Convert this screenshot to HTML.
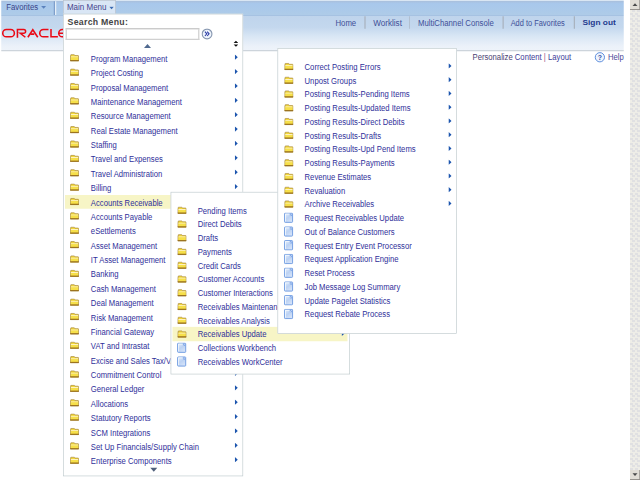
<!DOCTYPE html>
<html><head><meta charset="utf-8"><style>
html,body{margin:0;padding:0;width:640px;height:480px;overflow:hidden;background:#fff}
#s{position:absolute;left:0;top:0;width:1024px;height:768px;transform:scale(0.625);transform-origin:0 0;font-family:"Liberation Sans",sans-serif;overflow:hidden;background:#fff}
.a{position:absolute}
.t{font-size:12.3px;line-height:14px;color:#30309a;white-space:nowrap;transform:scaleY(1.12);transform-origin:0 11.3px}
.hl{background:#f7f5c6}
.menu{position:absolute;background:#fff;border:1.6px solid #bcc8cb;box-sizing:border-box;overflow:hidden}
.hdr{font-size:12.4px;line-height:14px;color:#3e4f98;white-space:nowrap;transform-origin:0 11.3px;transform:scaleY(1.12)}
.sep{position:absolute;width:1.6px;background:#a9b3bf}
</style></head><body><svg width="0" height="0" style="position:absolute"><defs><linearGradient id="pg" x1="0" y1="0" x2="0.6" y2="1"><stop offset="0" stop-color="#e4eefb"/><stop offset="0.55" stop-color="#bcd2f3"/><stop offset="1" stop-color="#d4e2f8"/></linearGradient></defs></svg><div id="s">
<div class="a" style="left:1.6px;top:0;width:996.8px;height:82.2px;background:linear-gradient(#d9e6f3 0,#d9e6f3 1.8px,#a9bfdc 1.8px,#a9c3e2 3px,#a8c8ec 6px,#aecbe8 23.4px,#a6c2e2 23.4px,#a6c2e2 25.4px,#bfd4ec 25.4px,#c4d8ee 44px,#dae7f5 59px,#ebf1f9 73.7px,#eef3fa 80.4px,#cdd4db 80.4px,#cdd4db 82.2px)"></div>
<div class="a hdr" style="left:10px;top:5.2px;color:#3a4488">Favorites</div>
<svg class="a" style="left:65px;top:9px" width="10" height="6" viewBox="0 0 10 6"><path d="M0.8 0.5 H8.8 L4.8 5 Z" fill="#5b82bd"/></svg>
<div class="a" style="left:86px;top:1.8px;width:1.7px;height:22px;background:#7f9fcb"></div>
<div class="a" style="left:87.7px;top:1.8px;width:1.9px;height:22px;background:#e6eff8"></div>
<svg class="a" style="left:0;top:40px" width="101" height="26" viewBox="0 0 101 26">
<g fill="none" stroke="#ea0a16" stroke-width="2.5">
<rect x="4.4" y="7.3" width="18.6" height="11.6" rx="5.8"/>
<path d="M27.9 20.2 V7.3 H38 A2.95 2.95 0 0 1 38 13.2 H32.5 L40.6 19.6"/>
<path d="M44.6 19.6 L52.5 7.6 L60.4 19.6"/>
<path d="M48.6 14.6 H54.8"/>
<path d="M77.6 7.3 H69.4 A5.8 5.8 0 0 0 69.4 18.9 H77.6"/>
<path d="M81.6 6.2 V18.9 H92.6"/>
<path d="M104 7.3 H99.8 A5.8 5.8 0 0 0 99.8 18.9 H104 M95 13.1 H104"/>
</g></svg>
<div class="a hdr" style="left:536.8px;top:29.5px;transform:scale(1.0,1.12)">Home</div>
<div class="a hdr" style="left:596.8px;top:29.5px;transform:scale(1.05,1.12)">Worklist</div>
<div class="a hdr" style="left:668.8px;top:29.5px;transform:scale(1.0,1.12)">MultiChannel Console</div>
<div class="a hdr" style="left:817.4px;top:29.5px;transform:scale(0.96,1.12)">Add to Favorites</div>
<div class="sep" style="left:583.2px;top:25.6px;height:20.8px"></div>
<div class="sep" style="left:654.6px;top:25.6px;height:20.8px"></div>
<div class="sep" style="left:804.4px;top:25.6px;height:20.8px"></div>
<div class="sep" style="left:918.2px;top:25.6px;height:20.8px"></div>
<div class="a hdr" style="left:932px;top:28.6px;font-size:12px;font-weight:bold;color:#1f3b8e;transform:scale(1.11,1.03)">Sign out</div>
<div class="a hdr" style="left:756px;top:84.5px;font-size:12.3px;color:#3c3c98"><span style="color:#4a4272">Personalize</span> Content <span style="color:#9a4a8a">|</span> Layout</div>
<svg class="a" style="left:950px;top:82px" width="20" height="20" viewBox="0 0 20 20"><circle cx="9.8" cy="9.6" r="7.4" fill="#eef4fd" stroke="#5f8fdc" stroke-width="1.6"/><text x="9.8" y="14" font-family="Liberation Sans" font-weight="bold" font-size="11" fill="#3354a8" text-anchor="middle">?</text></svg>
<div class="a hdr" style="left:972.8px;top:84.5px;font-size:12.3px;color:#4a4a98">Help</div>
<div class="a" style="left:1008px;top:0;width:16px;height:768px;background:conic-gradient(#e0e0e2 25%,#eeede7 0 50%,#e0e0e2 0 75%,#eeede7 0) 0 0/8px 8px"></div>
<div class="a" style="left:1008px;top:0;width:16px;height:15.5px;background:#e2ded6;border-right:1.6px solid #8a8680;border-bottom:1.6px solid #6a6660;box-sizing:border-box"></div>
<svg class="a" style="left:1010px;top:2px" width="12" height="10" viewBox="0 0 12 10"><path d="M2 7.5 L6 3 L10 7.5 Z" fill="#4a4a4a"/></svg>
<div class="a" style="left:1008px;top:752px;width:16px;height:16px;background:#e2ded6;border-right:1.6px solid #8a8680;border-bottom:1.6px solid #6a6660;box-sizing:border-box"></div>
<svg class="a" style="left:1010px;top:754px" width="12" height="10" viewBox="0 0 12 10"><path d="M2 3 L6 7.5 L10 3 Z" fill="#4a4a4a"/></svg>
<div class="a" style="left:100.8px;top:0;width:84.2px;height:22.4px;background:#d9e6f5;border:1.6px solid #b5bec9;border-bottom:none;box-sizing:border-box"></div>
<div class="a hdr" style="left:107px;top:5px;color:#45458e;transform:scale(1.035,1.12)">Main Menu</div>
<svg class="a" style="left:174px;top:10px" width="10" height="6" viewBox="0 0 10 6"><path d="M1 0.6 H8 L4.5 4.6 Z" fill="#3b6ab2"/></svg>
<div class="menu" style="left:100.8px;top:22px;width:288px;height:740px"></div>
<div class="a" style="left:108.2px;top:27px;font-size:14px;font-weight:bold;color:#454545;letter-spacing:0.42px;white-space:nowrap">Search Menu:</div>
<div class="a" style="left:104.6px;top:44.6px;width:214px;height:19px;background:#fff;border:2px solid #d0d0d0;border-top-color:#c4c4c4;box-sizing:border-box"></div>
<svg class="a" style="left:322px;top:44.6px" width="20" height="20" viewBox="0 0 20 20"><circle cx="9.3" cy="9.3" r="7.8" fill="#eef4fc" stroke="#8797b0" stroke-width="1.8"/><path d="M5.9 5.6 L8.9 9.1 L5.9 12.6 M9.5 5.6 L12.5 9.1 L9.5 12.6" fill="none" stroke="#2b3ca6" stroke-width="1.7"/></svg>
<svg class="a" style="left:229px;top:68.5px" width="14" height="9" viewBox="0 0 14 9"><path d="M1.4 7.8 L7 1.3 L12.6 7.8 Z" fill="#50698f"/></svg>
<svg class="a" style="left:372px;top:64px" width="11" height="12" viewBox="0 0 11 12"><path d="M1.8 4.6 L5.5 1 L9.2 4.6 Z M1.8 7 L5.5 10.8 L9.2 7 Z" fill="#111"/></svg>
<svg class="a" style="left:111.0px;top:85.7px" width="16" height="13" viewBox="0 0 16 13"><path d="M2.2 3.4 V1.9 Q2.2 1.5 2.6 1.5 H7.6 Q8 1.5 8.3 1.9 L8.9 2.9 H14 Q14.6 2.9 14.6 3.5 V11.4 H1.8 V3.4 Z" fill="#f2d83a" stroke="#a88840" stroke-width="1.1"/><rect x="2.4" y="4.4" width="11.6" height="1.5" fill="#fff6d4"/><rect x="2.4" y="5.9" width="11.6" height="4" fill="#f6e04a"/><rect x="1.3" y="10" width="13.8" height="1.9" fill="#9c7420"/></svg>
<div class="a t" style="left:145.4px;top:87.8px">Program Management</div>
<svg class="a" style="left:375.3px;top:86.8px" width="6" height="9" viewBox="0 0 6 9"><path d="M0.9 0.3 L5.4 4.5 L0.9 8.7 Z" fill="#1c55ae"/></svg>
<svg class="a" style="left:111.0px;top:108.7px" width="16" height="13" viewBox="0 0 16 13"><path d="M2.2 3.4 V1.9 Q2.2 1.5 2.6 1.5 H7.6 Q8 1.5 8.3 1.9 L8.9 2.9 H14 Q14.6 2.9 14.6 3.5 V11.4 H1.8 V3.4 Z" fill="#f2d83a" stroke="#a88840" stroke-width="1.1"/><rect x="2.4" y="4.4" width="11.6" height="1.5" fill="#fff6d4"/><rect x="2.4" y="5.9" width="11.6" height="4" fill="#f6e04a"/><rect x="1.3" y="10" width="13.8" height="1.9" fill="#9c7420"/></svg>
<div class="a t" style="left:145.4px;top:110.8px">Project Costing</div>
<svg class="a" style="left:375.3px;top:109.8px" width="6" height="9" viewBox="0 0 6 9"><path d="M0.9 0.3 L5.4 4.5 L0.9 8.7 Z" fill="#1c55ae"/></svg>
<svg class="a" style="left:111.0px;top:131.8px" width="16" height="13" viewBox="0 0 16 13"><path d="M2.2 3.4 V1.9 Q2.2 1.5 2.6 1.5 H7.6 Q8 1.5 8.3 1.9 L8.9 2.9 H14 Q14.6 2.9 14.6 3.5 V11.4 H1.8 V3.4 Z" fill="#f2d83a" stroke="#a88840" stroke-width="1.1"/><rect x="2.4" y="4.4" width="11.6" height="1.5" fill="#fff6d4"/><rect x="2.4" y="5.9" width="11.6" height="4" fill="#f6e04a"/><rect x="1.3" y="10" width="13.8" height="1.9" fill="#9c7420"/></svg>
<div class="a t" style="left:145.4px;top:133.8px">Proposal Management</div>
<svg class="a" style="left:375.3px;top:132.8px" width="6" height="9" viewBox="0 0 6 9"><path d="M0.9 0.3 L5.4 4.5 L0.9 8.7 Z" fill="#1c55ae"/></svg>
<svg class="a" style="left:111.0px;top:154.8px" width="16" height="13" viewBox="0 0 16 13"><path d="M2.2 3.4 V1.9 Q2.2 1.5 2.6 1.5 H7.6 Q8 1.5 8.3 1.9 L8.9 2.9 H14 Q14.6 2.9 14.6 3.5 V11.4 H1.8 V3.4 Z" fill="#f2d83a" stroke="#a88840" stroke-width="1.1"/><rect x="2.4" y="4.4" width="11.6" height="1.5" fill="#fff6d4"/><rect x="2.4" y="5.9" width="11.6" height="4" fill="#f6e04a"/><rect x="1.3" y="10" width="13.8" height="1.9" fill="#9c7420"/></svg>
<div class="a t" style="left:145.4px;top:156.9px">Maintenance Management</div>
<svg class="a" style="left:375.3px;top:155.9px" width="6" height="9" viewBox="0 0 6 9"><path d="M0.9 0.3 L5.4 4.5 L0.9 8.7 Z" fill="#1c55ae"/></svg>
<svg class="a" style="left:111.0px;top:177.8px" width="16" height="13" viewBox="0 0 16 13"><path d="M2.2 3.4 V1.9 Q2.2 1.5 2.6 1.5 H7.6 Q8 1.5 8.3 1.9 L8.9 2.9 H14 Q14.6 2.9 14.6 3.5 V11.4 H1.8 V3.4 Z" fill="#f2d83a" stroke="#a88840" stroke-width="1.1"/><rect x="2.4" y="4.4" width="11.6" height="1.5" fill="#fff6d4"/><rect x="2.4" y="5.9" width="11.6" height="4" fill="#f6e04a"/><rect x="1.3" y="10" width="13.8" height="1.9" fill="#9c7420"/></svg>
<div class="a t" style="left:145.4px;top:179.9px">Resource Management</div>
<svg class="a" style="left:375.3px;top:178.9px" width="6" height="9" viewBox="0 0 6 9"><path d="M0.9 0.3 L5.4 4.5 L0.9 8.7 Z" fill="#1c55ae"/></svg>
<svg class="a" style="left:111.0px;top:200.8px" width="16" height="13" viewBox="0 0 16 13"><path d="M2.2 3.4 V1.9 Q2.2 1.5 2.6 1.5 H7.6 Q8 1.5 8.3 1.9 L8.9 2.9 H14 Q14.6 2.9 14.6 3.5 V11.4 H1.8 V3.4 Z" fill="#f2d83a" stroke="#a88840" stroke-width="1.1"/><rect x="2.4" y="4.4" width="11.6" height="1.5" fill="#fff6d4"/><rect x="2.4" y="5.9" width="11.6" height="4" fill="#f6e04a"/><rect x="1.3" y="10" width="13.8" height="1.9" fill="#9c7420"/></svg>
<div class="a t" style="left:145.4px;top:202.9px">Real Estate Management</div>
<svg class="a" style="left:375.3px;top:201.9px" width="6" height="9" viewBox="0 0 6 9"><path d="M0.9 0.3 L5.4 4.5 L0.9 8.7 Z" fill="#1c55ae"/></svg>
<svg class="a" style="left:111.0px;top:223.8px" width="16" height="13" viewBox="0 0 16 13"><path d="M2.2 3.4 V1.9 Q2.2 1.5 2.6 1.5 H7.6 Q8 1.5 8.3 1.9 L8.9 2.9 H14 Q14.6 2.9 14.6 3.5 V11.4 H1.8 V3.4 Z" fill="#f2d83a" stroke="#a88840" stroke-width="1.1"/><rect x="2.4" y="4.4" width="11.6" height="1.5" fill="#fff6d4"/><rect x="2.4" y="5.9" width="11.6" height="4" fill="#f6e04a"/><rect x="1.3" y="10" width="13.8" height="1.9" fill="#9c7420"/></svg>
<div class="a t" style="left:145.4px;top:225.9px">Staffing</div>
<svg class="a" style="left:375.3px;top:224.9px" width="6" height="9" viewBox="0 0 6 9"><path d="M0.9 0.3 L5.4 4.5 L0.9 8.7 Z" fill="#1c55ae"/></svg>
<svg class="a" style="left:111.0px;top:246.8px" width="16" height="13" viewBox="0 0 16 13"><path d="M2.2 3.4 V1.9 Q2.2 1.5 2.6 1.5 H7.6 Q8 1.5 8.3 1.9 L8.9 2.9 H14 Q14.6 2.9 14.6 3.5 V11.4 H1.8 V3.4 Z" fill="#f2d83a" stroke="#a88840" stroke-width="1.1"/><rect x="2.4" y="4.4" width="11.6" height="1.5" fill="#fff6d4"/><rect x="2.4" y="5.9" width="11.6" height="4" fill="#f6e04a"/><rect x="1.3" y="10" width="13.8" height="1.9" fill="#9c7420"/></svg>
<div class="a t" style="left:145.4px;top:248.9px">Travel and Expenses</div>
<svg class="a" style="left:375.3px;top:247.9px" width="6" height="9" viewBox="0 0 6 9"><path d="M0.9 0.3 L5.4 4.5 L0.9 8.7 Z" fill="#1c55ae"/></svg>
<svg class="a" style="left:111.0px;top:269.9px" width="16" height="13" viewBox="0 0 16 13"><path d="M2.2 3.4 V1.9 Q2.2 1.5 2.6 1.5 H7.6 Q8 1.5 8.3 1.9 L8.9 2.9 H14 Q14.6 2.9 14.6 3.5 V11.4 H1.8 V3.4 Z" fill="#f2d83a" stroke="#a88840" stroke-width="1.1"/><rect x="2.4" y="4.4" width="11.6" height="1.5" fill="#fff6d4"/><rect x="2.4" y="5.9" width="11.6" height="4" fill="#f6e04a"/><rect x="1.3" y="10" width="13.8" height="1.9" fill="#9c7420"/></svg>
<div class="a t" style="left:145.4px;top:272.0px">Travel Administration</div>
<svg class="a" style="left:375.3px;top:271.0px" width="6" height="9" viewBox="0 0 6 9"><path d="M0.9 0.3 L5.4 4.5 L0.9 8.7 Z" fill="#1c55ae"/></svg>
<svg class="a" style="left:111.0px;top:292.9px" width="16" height="13" viewBox="0 0 16 13"><path d="M2.2 3.4 V1.9 Q2.2 1.5 2.6 1.5 H7.6 Q8 1.5 8.3 1.9 L8.9 2.9 H14 Q14.6 2.9 14.6 3.5 V11.4 H1.8 V3.4 Z" fill="#f2d83a" stroke="#a88840" stroke-width="1.1"/><rect x="2.4" y="4.4" width="11.6" height="1.5" fill="#fff6d4"/><rect x="2.4" y="5.9" width="11.6" height="4" fill="#f6e04a"/><rect x="1.3" y="10" width="13.8" height="1.9" fill="#9c7420"/></svg>
<div class="a t" style="left:145.4px;top:295.0px">Billing</div>
<svg class="a" style="left:375.3px;top:294.0px" width="6" height="9" viewBox="0 0 6 9"><path d="M0.9 0.3 L5.4 4.5 L0.9 8.7 Z" fill="#1c55ae"/></svg>
<div class="a hl" style="left:104.0px;top:312.1px;width:281.6px;height:22.4px"></div>
<svg class="a" style="left:111.0px;top:315.9px" width="16" height="13" viewBox="0 0 16 13"><path d="M2.2 3.4 V1.9 Q2.2 1.5 2.6 1.5 H7.6 Q8 1.5 8.3 1.9 L8.9 2.9 H14 Q14.6 2.9 14.6 3.5 V11.4 H1.8 V3.4 Z" fill="#f2d83a" stroke="#a88840" stroke-width="1.1"/><rect x="2.4" y="4.4" width="11.6" height="1.5" fill="#fff6d4"/><rect x="2.4" y="5.9" width="11.6" height="4" fill="#f6e04a"/><rect x="1.3" y="10" width="13.8" height="1.9" fill="#9c7420"/></svg>
<div class="a t" style="left:145.4px;top:318.0px">Accounts Receivable</div>
<svg class="a" style="left:375.3px;top:317.0px" width="6" height="9" viewBox="0 0 6 9"><path d="M0.9 0.3 L5.4 4.5 L0.9 8.7 Z" fill="#1c55ae"/></svg>
<svg class="a" style="left:111.0px;top:338.9px" width="16" height="13" viewBox="0 0 16 13"><path d="M2.2 3.4 V1.9 Q2.2 1.5 2.6 1.5 H7.6 Q8 1.5 8.3 1.9 L8.9 2.9 H14 Q14.6 2.9 14.6 3.5 V11.4 H1.8 V3.4 Z" fill="#f2d83a" stroke="#a88840" stroke-width="1.1"/><rect x="2.4" y="4.4" width="11.6" height="1.5" fill="#fff6d4"/><rect x="2.4" y="5.9" width="11.6" height="4" fill="#f6e04a"/><rect x="1.3" y="10" width="13.8" height="1.9" fill="#9c7420"/></svg>
<div class="a t" style="left:145.4px;top:341.0px">Accounts Payable</div>
<svg class="a" style="left:375.3px;top:340.0px" width="6" height="9" viewBox="0 0 6 9"><path d="M0.9 0.3 L5.4 4.5 L0.9 8.7 Z" fill="#1c55ae"/></svg>
<svg class="a" style="left:111.0px;top:361.9px" width="16" height="13" viewBox="0 0 16 13"><path d="M2.2 3.4 V1.9 Q2.2 1.5 2.6 1.5 H7.6 Q8 1.5 8.3 1.9 L8.9 2.9 H14 Q14.6 2.9 14.6 3.5 V11.4 H1.8 V3.4 Z" fill="#f2d83a" stroke="#a88840" stroke-width="1.1"/><rect x="2.4" y="4.4" width="11.6" height="1.5" fill="#fff6d4"/><rect x="2.4" y="5.9" width="11.6" height="4" fill="#f6e04a"/><rect x="1.3" y="10" width="13.8" height="1.9" fill="#9c7420"/></svg>
<div class="a t" style="left:145.4px;top:364.1px">eSettlements</div>
<svg class="a" style="left:375.3px;top:363.1px" width="6" height="9" viewBox="0 0 6 9"><path d="M0.9 0.3 L5.4 4.5 L0.9 8.7 Z" fill="#1c55ae"/></svg>
<svg class="a" style="left:111.0px;top:385.0px" width="16" height="13" viewBox="0 0 16 13"><path d="M2.2 3.4 V1.9 Q2.2 1.5 2.6 1.5 H7.6 Q8 1.5 8.3 1.9 L8.9 2.9 H14 Q14.6 2.9 14.6 3.5 V11.4 H1.8 V3.4 Z" fill="#f2d83a" stroke="#a88840" stroke-width="1.1"/><rect x="2.4" y="4.4" width="11.6" height="1.5" fill="#fff6d4"/><rect x="2.4" y="5.9" width="11.6" height="4" fill="#f6e04a"/><rect x="1.3" y="10" width="13.8" height="1.9" fill="#9c7420"/></svg>
<div class="a t" style="left:145.4px;top:387.1px">Asset Management</div>
<svg class="a" style="left:375.3px;top:386.1px" width="6" height="9" viewBox="0 0 6 9"><path d="M0.9 0.3 L5.4 4.5 L0.9 8.7 Z" fill="#1c55ae"/></svg>
<svg class="a" style="left:111.0px;top:408.0px" width="16" height="13" viewBox="0 0 16 13"><path d="M2.2 3.4 V1.9 Q2.2 1.5 2.6 1.5 H7.6 Q8 1.5 8.3 1.9 L8.9 2.9 H14 Q14.6 2.9 14.6 3.5 V11.4 H1.8 V3.4 Z" fill="#f2d83a" stroke="#a88840" stroke-width="1.1"/><rect x="2.4" y="4.4" width="11.6" height="1.5" fill="#fff6d4"/><rect x="2.4" y="5.9" width="11.6" height="4" fill="#f6e04a"/><rect x="1.3" y="10" width="13.8" height="1.9" fill="#9c7420"/></svg>
<div class="a t" style="left:145.4px;top:410.1px">IT Asset Management</div>
<svg class="a" style="left:375.3px;top:409.1px" width="6" height="9" viewBox="0 0 6 9"><path d="M0.9 0.3 L5.4 4.5 L0.9 8.7 Z" fill="#1c55ae"/></svg>
<svg class="a" style="left:111.0px;top:431.0px" width="16" height="13" viewBox="0 0 16 13"><path d="M2.2 3.4 V1.9 Q2.2 1.5 2.6 1.5 H7.6 Q8 1.5 8.3 1.9 L8.9 2.9 H14 Q14.6 2.9 14.6 3.5 V11.4 H1.8 V3.4 Z" fill="#f2d83a" stroke="#a88840" stroke-width="1.1"/><rect x="2.4" y="4.4" width="11.6" height="1.5" fill="#fff6d4"/><rect x="2.4" y="5.9" width="11.6" height="4" fill="#f6e04a"/><rect x="1.3" y="10" width="13.8" height="1.9" fill="#9c7420"/></svg>
<div class="a t" style="left:145.4px;top:433.1px">Banking</div>
<svg class="a" style="left:375.3px;top:432.1px" width="6" height="9" viewBox="0 0 6 9"><path d="M0.9 0.3 L5.4 4.5 L0.9 8.7 Z" fill="#1c55ae"/></svg>
<svg class="a" style="left:111.0px;top:454.0px" width="16" height="13" viewBox="0 0 16 13"><path d="M2.2 3.4 V1.9 Q2.2 1.5 2.6 1.5 H7.6 Q8 1.5 8.3 1.9 L8.9 2.9 H14 Q14.6 2.9 14.6 3.5 V11.4 H1.8 V3.4 Z" fill="#f2d83a" stroke="#a88840" stroke-width="1.1"/><rect x="2.4" y="4.4" width="11.6" height="1.5" fill="#fff6d4"/><rect x="2.4" y="5.9" width="11.6" height="4" fill="#f6e04a"/><rect x="1.3" y="10" width="13.8" height="1.9" fill="#9c7420"/></svg>
<div class="a t" style="left:145.4px;top:456.1px">Cash Management</div>
<svg class="a" style="left:375.3px;top:455.1px" width="6" height="9" viewBox="0 0 6 9"><path d="M0.9 0.3 L5.4 4.5 L0.9 8.7 Z" fill="#1c55ae"/></svg>
<svg class="a" style="left:111.0px;top:477.0px" width="16" height="13" viewBox="0 0 16 13"><path d="M2.2 3.4 V1.9 Q2.2 1.5 2.6 1.5 H7.6 Q8 1.5 8.3 1.9 L8.9 2.9 H14 Q14.6 2.9 14.6 3.5 V11.4 H1.8 V3.4 Z" fill="#f2d83a" stroke="#a88840" stroke-width="1.1"/><rect x="2.4" y="4.4" width="11.6" height="1.5" fill="#fff6d4"/><rect x="2.4" y="5.9" width="11.6" height="4" fill="#f6e04a"/><rect x="1.3" y="10" width="13.8" height="1.9" fill="#9c7420"/></svg>
<div class="a t" style="left:145.4px;top:479.1px">Deal Management</div>
<svg class="a" style="left:375.3px;top:478.1px" width="6" height="9" viewBox="0 0 6 9"><path d="M0.9 0.3 L5.4 4.5 L0.9 8.7 Z" fill="#1c55ae"/></svg>
<svg class="a" style="left:111.0px;top:500.1px" width="16" height="13" viewBox="0 0 16 13"><path d="M2.2 3.4 V1.9 Q2.2 1.5 2.6 1.5 H7.6 Q8 1.5 8.3 1.9 L8.9 2.9 H14 Q14.6 2.9 14.6 3.5 V11.4 H1.8 V3.4 Z" fill="#f2d83a" stroke="#a88840" stroke-width="1.1"/><rect x="2.4" y="4.4" width="11.6" height="1.5" fill="#fff6d4"/><rect x="2.4" y="5.9" width="11.6" height="4" fill="#f6e04a"/><rect x="1.3" y="10" width="13.8" height="1.9" fill="#9c7420"/></svg>
<div class="a t" style="left:145.4px;top:502.2px">Risk Management</div>
<svg class="a" style="left:375.3px;top:501.2px" width="6" height="9" viewBox="0 0 6 9"><path d="M0.9 0.3 L5.4 4.5 L0.9 8.7 Z" fill="#1c55ae"/></svg>
<svg class="a" style="left:111.0px;top:523.1px" width="16" height="13" viewBox="0 0 16 13"><path d="M2.2 3.4 V1.9 Q2.2 1.5 2.6 1.5 H7.6 Q8 1.5 8.3 1.9 L8.9 2.9 H14 Q14.6 2.9 14.6 3.5 V11.4 H1.8 V3.4 Z" fill="#f2d83a" stroke="#a88840" stroke-width="1.1"/><rect x="2.4" y="4.4" width="11.6" height="1.5" fill="#fff6d4"/><rect x="2.4" y="5.9" width="11.6" height="4" fill="#f6e04a"/><rect x="1.3" y="10" width="13.8" height="1.9" fill="#9c7420"/></svg>
<div class="a t" style="left:145.4px;top:525.2px">Financial Gateway</div>
<svg class="a" style="left:375.3px;top:524.2px" width="6" height="9" viewBox="0 0 6 9"><path d="M0.9 0.3 L5.4 4.5 L0.9 8.7 Z" fill="#1c55ae"/></svg>
<svg class="a" style="left:111.0px;top:546.1px" width="16" height="13" viewBox="0 0 16 13"><path d="M2.2 3.4 V1.9 Q2.2 1.5 2.6 1.5 H7.6 Q8 1.5 8.3 1.9 L8.9 2.9 H14 Q14.6 2.9 14.6 3.5 V11.4 H1.8 V3.4 Z" fill="#f2d83a" stroke="#a88840" stroke-width="1.1"/><rect x="2.4" y="4.4" width="11.6" height="1.5" fill="#fff6d4"/><rect x="2.4" y="5.9" width="11.6" height="4" fill="#f6e04a"/><rect x="1.3" y="10" width="13.8" height="1.9" fill="#9c7420"/></svg>
<div class="a t" style="left:145.4px;top:548.2px">VAT and Intrastat</div>
<svg class="a" style="left:375.3px;top:547.2px" width="6" height="9" viewBox="0 0 6 9"><path d="M0.9 0.3 L5.4 4.5 L0.9 8.7 Z" fill="#1c55ae"/></svg>
<svg class="a" style="left:111.0px;top:569.1px" width="16" height="13" viewBox="0 0 16 13"><path d="M2.2 3.4 V1.9 Q2.2 1.5 2.6 1.5 H7.6 Q8 1.5 8.3 1.9 L8.9 2.9 H14 Q14.6 2.9 14.6 3.5 V11.4 H1.8 V3.4 Z" fill="#f2d83a" stroke="#a88840" stroke-width="1.1"/><rect x="2.4" y="4.4" width="11.6" height="1.5" fill="#fff6d4"/><rect x="2.4" y="5.9" width="11.6" height="4" fill="#f6e04a"/><rect x="1.3" y="10" width="13.8" height="1.9" fill="#9c7420"/></svg>
<div class="a t" style="left:145.4px;top:571.2px">Excise and Sales Tax/VAT IND</div>
<svg class="a" style="left:375.3px;top:570.2px" width="6" height="9" viewBox="0 0 6 9"><path d="M0.9 0.3 L5.4 4.5 L0.9 8.7 Z" fill="#1c55ae"/></svg>
<svg class="a" style="left:111.0px;top:592.1px" width="16" height="13" viewBox="0 0 16 13"><path d="M2.2 3.4 V1.9 Q2.2 1.5 2.6 1.5 H7.6 Q8 1.5 8.3 1.9 L8.9 2.9 H14 Q14.6 2.9 14.6 3.5 V11.4 H1.8 V3.4 Z" fill="#f2d83a" stroke="#a88840" stroke-width="1.1"/><rect x="2.4" y="4.4" width="11.6" height="1.5" fill="#fff6d4"/><rect x="2.4" y="5.9" width="11.6" height="4" fill="#f6e04a"/><rect x="1.3" y="10" width="13.8" height="1.9" fill="#9c7420"/></svg>
<div class="a t" style="left:145.4px;top:594.2px">Commitment Control</div>
<svg class="a" style="left:375.3px;top:593.2px" width="6" height="9" viewBox="0 0 6 9"><path d="M0.9 0.3 L5.4 4.5 L0.9 8.7 Z" fill="#1c55ae"/></svg>
<svg class="a" style="left:111.0px;top:615.2px" width="16" height="13" viewBox="0 0 16 13"><path d="M2.2 3.4 V1.9 Q2.2 1.5 2.6 1.5 H7.6 Q8 1.5 8.3 1.9 L8.9 2.9 H14 Q14.6 2.9 14.6 3.5 V11.4 H1.8 V3.4 Z" fill="#f2d83a" stroke="#a88840" stroke-width="1.1"/><rect x="2.4" y="4.4" width="11.6" height="1.5" fill="#fff6d4"/><rect x="2.4" y="5.9" width="11.6" height="4" fill="#f6e04a"/><rect x="1.3" y="10" width="13.8" height="1.9" fill="#9c7420"/></svg>
<div class="a t" style="left:145.4px;top:617.3px">General Ledger</div>
<svg class="a" style="left:375.3px;top:616.3px" width="6" height="9" viewBox="0 0 6 9"><path d="M0.9 0.3 L5.4 4.5 L0.9 8.7 Z" fill="#1c55ae"/></svg>
<svg class="a" style="left:111.0px;top:638.2px" width="16" height="13" viewBox="0 0 16 13"><path d="M2.2 3.4 V1.9 Q2.2 1.5 2.6 1.5 H7.6 Q8 1.5 8.3 1.9 L8.9 2.9 H14 Q14.6 2.9 14.6 3.5 V11.4 H1.8 V3.4 Z" fill="#f2d83a" stroke="#a88840" stroke-width="1.1"/><rect x="2.4" y="4.4" width="11.6" height="1.5" fill="#fff6d4"/><rect x="2.4" y="5.9" width="11.6" height="4" fill="#f6e04a"/><rect x="1.3" y="10" width="13.8" height="1.9" fill="#9c7420"/></svg>
<div class="a t" style="left:145.4px;top:640.3px">Allocations</div>
<svg class="a" style="left:375.3px;top:639.3px" width="6" height="9" viewBox="0 0 6 9"><path d="M0.9 0.3 L5.4 4.5 L0.9 8.7 Z" fill="#1c55ae"/></svg>
<svg class="a" style="left:111.0px;top:661.2px" width="16" height="13" viewBox="0 0 16 13"><path d="M2.2 3.4 V1.9 Q2.2 1.5 2.6 1.5 H7.6 Q8 1.5 8.3 1.9 L8.9 2.9 H14 Q14.6 2.9 14.6 3.5 V11.4 H1.8 V3.4 Z" fill="#f2d83a" stroke="#a88840" stroke-width="1.1"/><rect x="2.4" y="4.4" width="11.6" height="1.5" fill="#fff6d4"/><rect x="2.4" y="5.9" width="11.6" height="4" fill="#f6e04a"/><rect x="1.3" y="10" width="13.8" height="1.9" fill="#9c7420"/></svg>
<div class="a t" style="left:145.4px;top:663.3px">Statutory Reports</div>
<svg class="a" style="left:375.3px;top:662.3px" width="6" height="9" viewBox="0 0 6 9"><path d="M0.9 0.3 L5.4 4.5 L0.9 8.7 Z" fill="#1c55ae"/></svg>
<svg class="a" style="left:111.0px;top:684.2px" width="16" height="13" viewBox="0 0 16 13"><path d="M2.2 3.4 V1.9 Q2.2 1.5 2.6 1.5 H7.6 Q8 1.5 8.3 1.9 L8.9 2.9 H14 Q14.6 2.9 14.6 3.5 V11.4 H1.8 V3.4 Z" fill="#f2d83a" stroke="#a88840" stroke-width="1.1"/><rect x="2.4" y="4.4" width="11.6" height="1.5" fill="#fff6d4"/><rect x="2.4" y="5.9" width="11.6" height="4" fill="#f6e04a"/><rect x="1.3" y="10" width="13.8" height="1.9" fill="#9c7420"/></svg>
<div class="a t" style="left:145.4px;top:686.3px">SCM Integrations</div>
<svg class="a" style="left:375.3px;top:685.3px" width="6" height="9" viewBox="0 0 6 9"><path d="M0.9 0.3 L5.4 4.5 L0.9 8.7 Z" fill="#1c55ae"/></svg>
<svg class="a" style="left:111.0px;top:707.2px" width="16" height="13" viewBox="0 0 16 13"><path d="M2.2 3.4 V1.9 Q2.2 1.5 2.6 1.5 H7.6 Q8 1.5 8.3 1.9 L8.9 2.9 H14 Q14.6 2.9 14.6 3.5 V11.4 H1.8 V3.4 Z" fill="#f2d83a" stroke="#a88840" stroke-width="1.1"/><rect x="2.4" y="4.4" width="11.6" height="1.5" fill="#fff6d4"/><rect x="2.4" y="5.9" width="11.6" height="4" fill="#f6e04a"/><rect x="1.3" y="10" width="13.8" height="1.9" fill="#9c7420"/></svg>
<div class="a t" style="left:145.4px;top:709.3px">Set Up Financials/Supply Chain</div>
<svg class="a" style="left:375.3px;top:708.3px" width="6" height="9" viewBox="0 0 6 9"><path d="M0.9 0.3 L5.4 4.5 L0.9 8.7 Z" fill="#1c55ae"/></svg>
<svg class="a" style="left:111.0px;top:730.3px" width="16" height="13" viewBox="0 0 16 13"><path d="M2.2 3.4 V1.9 Q2.2 1.5 2.6 1.5 H7.6 Q8 1.5 8.3 1.9 L8.9 2.9 H14 Q14.6 2.9 14.6 3.5 V11.4 H1.8 V3.4 Z" fill="#f2d83a" stroke="#a88840" stroke-width="1.1"/><rect x="2.4" y="4.4" width="11.6" height="1.5" fill="#fff6d4"/><rect x="2.4" y="5.9" width="11.6" height="4" fill="#f6e04a"/><rect x="1.3" y="10" width="13.8" height="1.9" fill="#9c7420"/></svg>
<div class="a t" style="left:145.4px;top:732.4px">Enterprise Components</div>
<svg class="a" style="left:375.3px;top:731.4px" width="6" height="9" viewBox="0 0 6 9"><path d="M0.9 0.3 L5.4 4.5 L0.9 8.7 Z" fill="#1c55ae"/></svg>
<svg class="a" style="left:238.5px;top:747px" width="14" height="9" viewBox="0 0 14 9"><path d="M1.4 1.3 L7 7.8 L12.6 1.3 Z" fill="#4f5f7a"/></svg>
<div class="menu" style="left:272.5px;top:307px;width:287px;height:292px">
</div>
<div class="a" style="left:272.5px;top:307px;width:287px;height:292px;overflow:hidden">
<svg class="a" style="left:10.2px;top:23.0px" width="16" height="13" viewBox="0 0 16 13"><path d="M2.2 3.4 V1.9 Q2.2 1.5 2.6 1.5 H7.6 Q8 1.5 8.3 1.9 L8.9 2.9 H14 Q14.6 2.9 14.6 3.5 V11.4 H1.8 V3.4 Z" fill="#f2d83a" stroke="#a88840" stroke-width="1.1"/><rect x="2.4" y="4.4" width="11.6" height="1.5" fill="#fff6d4"/><rect x="2.4" y="5.9" width="11.6" height="4" fill="#f6e04a"/><rect x="1.3" y="10" width="13.8" height="1.9" fill="#9c7420"/></svg>
<div class="a t" style="left:43.8px;top:24.1px">Pending Items</div>
<svg class="a" style="left:273.5px;top:24.1px" width="6" height="9" viewBox="0 0 6 9"><path d="M0.9 0.3 L5.4 4.5 L0.9 8.7 Z" fill="#1c55ae"/></svg>
<svg class="a" style="left:10.2px;top:45.0px" width="16" height="13" viewBox="0 0 16 13"><path d="M2.2 3.4 V1.9 Q2.2 1.5 2.6 1.5 H7.6 Q8 1.5 8.3 1.9 L8.9 2.9 H14 Q14.6 2.9 14.6 3.5 V11.4 H1.8 V3.4 Z" fill="#f2d83a" stroke="#a88840" stroke-width="1.1"/><rect x="2.4" y="4.4" width="11.6" height="1.5" fill="#fff6d4"/><rect x="2.4" y="5.9" width="11.6" height="4" fill="#f6e04a"/><rect x="1.3" y="10" width="13.8" height="1.9" fill="#9c7420"/></svg>
<div class="a t" style="left:43.8px;top:46.1px">Direct Debits</div>
<svg class="a" style="left:273.5px;top:46.1px" width="6" height="9" viewBox="0 0 6 9"><path d="M0.9 0.3 L5.4 4.5 L0.9 8.7 Z" fill="#1c55ae"/></svg>
<svg class="a" style="left:10.2px;top:67.0px" width="16" height="13" viewBox="0 0 16 13"><path d="M2.2 3.4 V1.9 Q2.2 1.5 2.6 1.5 H7.6 Q8 1.5 8.3 1.9 L8.9 2.9 H14 Q14.6 2.9 14.6 3.5 V11.4 H1.8 V3.4 Z" fill="#f2d83a" stroke="#a88840" stroke-width="1.1"/><rect x="2.4" y="4.4" width="11.6" height="1.5" fill="#fff6d4"/><rect x="2.4" y="5.9" width="11.6" height="4" fill="#f6e04a"/><rect x="1.3" y="10" width="13.8" height="1.9" fill="#9c7420"/></svg>
<div class="a t" style="left:43.8px;top:68.1px">Drafts</div>
<svg class="a" style="left:273.5px;top:68.1px" width="6" height="9" viewBox="0 0 6 9"><path d="M0.9 0.3 L5.4 4.5 L0.9 8.7 Z" fill="#1c55ae"/></svg>
<svg class="a" style="left:10.2px;top:89.0px" width="16" height="13" viewBox="0 0 16 13"><path d="M2.2 3.4 V1.9 Q2.2 1.5 2.6 1.5 H7.6 Q8 1.5 8.3 1.9 L8.9 2.9 H14 Q14.6 2.9 14.6 3.5 V11.4 H1.8 V3.4 Z" fill="#f2d83a" stroke="#a88840" stroke-width="1.1"/><rect x="2.4" y="4.4" width="11.6" height="1.5" fill="#fff6d4"/><rect x="2.4" y="5.9" width="11.6" height="4" fill="#f6e04a"/><rect x="1.3" y="10" width="13.8" height="1.9" fill="#9c7420"/></svg>
<div class="a t" style="left:43.8px;top:90.1px">Payments</div>
<svg class="a" style="left:273.5px;top:90.1px" width="6" height="9" viewBox="0 0 6 9"><path d="M0.9 0.3 L5.4 4.5 L0.9 8.7 Z" fill="#1c55ae"/></svg>
<svg class="a" style="left:10.2px;top:111.0px" width="16" height="13" viewBox="0 0 16 13"><path d="M2.2 3.4 V1.9 Q2.2 1.5 2.6 1.5 H7.6 Q8 1.5 8.3 1.9 L8.9 2.9 H14 Q14.6 2.9 14.6 3.5 V11.4 H1.8 V3.4 Z" fill="#f2d83a" stroke="#a88840" stroke-width="1.1"/><rect x="2.4" y="4.4" width="11.6" height="1.5" fill="#fff6d4"/><rect x="2.4" y="5.9" width="11.6" height="4" fill="#f6e04a"/><rect x="1.3" y="10" width="13.8" height="1.9" fill="#9c7420"/></svg>
<div class="a t" style="left:43.8px;top:112.1px">Credit Cards</div>
<svg class="a" style="left:273.5px;top:112.1px" width="6" height="9" viewBox="0 0 6 9"><path d="M0.9 0.3 L5.4 4.5 L0.9 8.7 Z" fill="#1c55ae"/></svg>
<svg class="a" style="left:10.2px;top:133.0px" width="16" height="13" viewBox="0 0 16 13"><path d="M2.2 3.4 V1.9 Q2.2 1.5 2.6 1.5 H7.6 Q8 1.5 8.3 1.9 L8.9 2.9 H14 Q14.6 2.9 14.6 3.5 V11.4 H1.8 V3.4 Z" fill="#f2d83a" stroke="#a88840" stroke-width="1.1"/><rect x="2.4" y="4.4" width="11.6" height="1.5" fill="#fff6d4"/><rect x="2.4" y="5.9" width="11.6" height="4" fill="#f6e04a"/><rect x="1.3" y="10" width="13.8" height="1.9" fill="#9c7420"/></svg>
<div class="a t" style="left:43.8px;top:134.1px">Customer Accounts</div>
<svg class="a" style="left:273.5px;top:134.1px" width="6" height="9" viewBox="0 0 6 9"><path d="M0.9 0.3 L5.4 4.5 L0.9 8.7 Z" fill="#1c55ae"/></svg>
<svg class="a" style="left:10.2px;top:155.0px" width="16" height="13" viewBox="0 0 16 13"><path d="M2.2 3.4 V1.9 Q2.2 1.5 2.6 1.5 H7.6 Q8 1.5 8.3 1.9 L8.9 2.9 H14 Q14.6 2.9 14.6 3.5 V11.4 H1.8 V3.4 Z" fill="#f2d83a" stroke="#a88840" stroke-width="1.1"/><rect x="2.4" y="4.4" width="11.6" height="1.5" fill="#fff6d4"/><rect x="2.4" y="5.9" width="11.6" height="4" fill="#f6e04a"/><rect x="1.3" y="10" width="13.8" height="1.9" fill="#9c7420"/></svg>
<div class="a t" style="left:43.8px;top:156.1px">Customer Interactions</div>
<svg class="a" style="left:273.5px;top:156.1px" width="6" height="9" viewBox="0 0 6 9"><path d="M0.9 0.3 L5.4 4.5 L0.9 8.7 Z" fill="#1c55ae"/></svg>
<svg class="a" style="left:10.2px;top:177.0px" width="16" height="13" viewBox="0 0 16 13"><path d="M2.2 3.4 V1.9 Q2.2 1.5 2.6 1.5 H7.6 Q8 1.5 8.3 1.9 L8.9 2.9 H14 Q14.6 2.9 14.6 3.5 V11.4 H1.8 V3.4 Z" fill="#f2d83a" stroke="#a88840" stroke-width="1.1"/><rect x="2.4" y="4.4" width="11.6" height="1.5" fill="#fff6d4"/><rect x="2.4" y="5.9" width="11.6" height="4" fill="#f6e04a"/><rect x="1.3" y="10" width="13.8" height="1.9" fill="#9c7420"/></svg>
<div class="a t" style="left:43.8px;top:178.1px">Receivables Maintenance</div>
<svg class="a" style="left:273.5px;top:178.1px" width="6" height="9" viewBox="0 0 6 9"><path d="M0.9 0.3 L5.4 4.5 L0.9 8.7 Z" fill="#1c55ae"/></svg>
<svg class="a" style="left:10.2px;top:199.0px" width="16" height="13" viewBox="0 0 16 13"><path d="M2.2 3.4 V1.9 Q2.2 1.5 2.6 1.5 H7.6 Q8 1.5 8.3 1.9 L8.9 2.9 H14 Q14.6 2.9 14.6 3.5 V11.4 H1.8 V3.4 Z" fill="#f2d83a" stroke="#a88840" stroke-width="1.1"/><rect x="2.4" y="4.4" width="11.6" height="1.5" fill="#fff6d4"/><rect x="2.4" y="5.9" width="11.6" height="4" fill="#f6e04a"/><rect x="1.3" y="10" width="13.8" height="1.9" fill="#9c7420"/></svg>
<div class="a t" style="left:43.8px;top:200.1px">Receivables Analysis</div>
<svg class="a" style="left:273.5px;top:200.1px" width="6" height="9" viewBox="0 0 6 9"><path d="M0.9 0.3 L5.4 4.5 L0.9 8.7 Z" fill="#1c55ae"/></svg>
<div class="a hl" style="left:3.2px;top:216.4px;width:280.6px;height:22.4px"></div>
<svg class="a" style="left:10.2px;top:221.0px" width="16" height="13" viewBox="0 0 16 13"><path d="M2.2 3.4 V1.9 Q2.2 1.5 2.6 1.5 H7.6 Q8 1.5 8.3 1.9 L8.9 2.9 H14 Q14.6 2.9 14.6 3.5 V11.4 H1.8 V3.4 Z" fill="#f2d83a" stroke="#a88840" stroke-width="1.1"/><rect x="2.4" y="4.4" width="11.6" height="1.5" fill="#fff6d4"/><rect x="2.4" y="5.9" width="11.6" height="4" fill="#f6e04a"/><rect x="1.3" y="10" width="13.8" height="1.9" fill="#9c7420"/></svg>
<div class="a t" style="left:43.8px;top:222.1px">Receivables Update</div>
<svg class="a" style="left:273.5px;top:222.1px" width="6" height="9" viewBox="0 0 6 9"><path d="M0.9 0.3 L5.4 4.5 L0.9 8.7 Z" fill="#1c55ae"/></svg>
<svg class="a" style="left:10.2px;top:241.2px" width="16" height="17" viewBox="0 0 16 17"><rect x="1.15" y="0.95" width="13" height="14.8" rx="1.2" fill="url(#pg)" stroke="#6d9ae0" stroke-width="1.5"/><path d="M2.7 14.2 V2.5 H9.4" stroke="#fbfdff" stroke-width="1.2" fill="none"/><rect x="9.7" y="1.7" width="3.8" height="3.8" fill="#84aae8"/><path d="M10 5.2 L13.2 2" stroke="#eef4ff" stroke-width="0.8"/></svg>
<div class="a t" style="left:43.8px;top:244.1px">Collections Workbench</div>
<svg class="a" style="left:10.2px;top:263.2px" width="16" height="17" viewBox="0 0 16 17"><rect x="1.15" y="0.95" width="13" height="14.8" rx="1.2" fill="url(#pg)" stroke="#6d9ae0" stroke-width="1.5"/><path d="M2.7 14.2 V2.5 H9.4" stroke="#fbfdff" stroke-width="1.2" fill="none"/><rect x="9.7" y="1.7" width="3.8" height="3.8" fill="#84aae8"/><path d="M10 5.2 L13.2 2" stroke="#eef4ff" stroke-width="0.8"/></svg>
<div class="a t" style="left:43.8px;top:266.1px">Receivables WorkCenter</div>
</div>
<div class="menu" style="left:443.5px;top:76.8px;width:287.8px;height:457.2px"></div>
<div class="a" style="left:443.5px;top:76.8px;width:287.8px;height:457.2px;overflow:hidden">
<svg class="a" style="left:10.2px;top:22.8px" width="16" height="13" viewBox="0 0 16 13"><path d="M2.2 3.4 V1.9 Q2.2 1.5 2.6 1.5 H7.6 Q8 1.5 8.3 1.9 L8.9 2.9 H14 Q14.6 2.9 14.6 3.5 V11.4 H1.8 V3.4 Z" fill="#f2d83a" stroke="#a88840" stroke-width="1.1"/><rect x="2.4" y="4.4" width="11.6" height="1.5" fill="#fff6d4"/><rect x="2.4" y="5.9" width="11.6" height="4" fill="#f6e04a"/><rect x="1.3" y="10" width="13.8" height="1.9" fill="#9c7420"/></svg>
<div class="a t" style="left:43.8px;top:24.1px">Correct Posting Errors</div>
<svg class="a" style="left:273.8px;top:23.9px" width="6" height="9" viewBox="0 0 6 9"><path d="M0.9 0.3 L5.4 4.5 L0.9 8.7 Z" fill="#1c55ae"/></svg>
<svg class="a" style="left:10.2px;top:44.8px" width="16" height="13" viewBox="0 0 16 13"><path d="M2.2 3.4 V1.9 Q2.2 1.5 2.6 1.5 H7.6 Q8 1.5 8.3 1.9 L8.9 2.9 H14 Q14.6 2.9 14.6 3.5 V11.4 H1.8 V3.4 Z" fill="#f2d83a" stroke="#a88840" stroke-width="1.1"/><rect x="2.4" y="4.4" width="11.6" height="1.5" fill="#fff6d4"/><rect x="2.4" y="5.9" width="11.6" height="4" fill="#f6e04a"/><rect x="1.3" y="10" width="13.8" height="1.9" fill="#9c7420"/></svg>
<div class="a t" style="left:43.8px;top:46.1px">Unpost Groups</div>
<svg class="a" style="left:273.8px;top:45.9px" width="6" height="9" viewBox="0 0 6 9"><path d="M0.9 0.3 L5.4 4.5 L0.9 8.7 Z" fill="#1c55ae"/></svg>
<svg class="a" style="left:10.2px;top:66.8px" width="16" height="13" viewBox="0 0 16 13"><path d="M2.2 3.4 V1.9 Q2.2 1.5 2.6 1.5 H7.6 Q8 1.5 8.3 1.9 L8.9 2.9 H14 Q14.6 2.9 14.6 3.5 V11.4 H1.8 V3.4 Z" fill="#f2d83a" stroke="#a88840" stroke-width="1.1"/><rect x="2.4" y="4.4" width="11.6" height="1.5" fill="#fff6d4"/><rect x="2.4" y="5.9" width="11.6" height="4" fill="#f6e04a"/><rect x="1.3" y="10" width="13.8" height="1.9" fill="#9c7420"/></svg>
<div class="a t" style="left:43.8px;top:68.1px">Posting Results-Pending Items</div>
<svg class="a" style="left:273.8px;top:67.9px" width="6" height="9" viewBox="0 0 6 9"><path d="M0.9 0.3 L5.4 4.5 L0.9 8.7 Z" fill="#1c55ae"/></svg>
<svg class="a" style="left:10.2px;top:88.8px" width="16" height="13" viewBox="0 0 16 13"><path d="M2.2 3.4 V1.9 Q2.2 1.5 2.6 1.5 H7.6 Q8 1.5 8.3 1.9 L8.9 2.9 H14 Q14.6 2.9 14.6 3.5 V11.4 H1.8 V3.4 Z" fill="#f2d83a" stroke="#a88840" stroke-width="1.1"/><rect x="2.4" y="4.4" width="11.6" height="1.5" fill="#fff6d4"/><rect x="2.4" y="5.9" width="11.6" height="4" fill="#f6e04a"/><rect x="1.3" y="10" width="13.8" height="1.9" fill="#9c7420"/></svg>
<div class="a t" style="left:43.8px;top:90.1px">Posting Results-Updated Items</div>
<svg class="a" style="left:273.8px;top:89.9px" width="6" height="9" viewBox="0 0 6 9"><path d="M0.9 0.3 L5.4 4.5 L0.9 8.7 Z" fill="#1c55ae"/></svg>
<svg class="a" style="left:10.2px;top:110.8px" width="16" height="13" viewBox="0 0 16 13"><path d="M2.2 3.4 V1.9 Q2.2 1.5 2.6 1.5 H7.6 Q8 1.5 8.3 1.9 L8.9 2.9 H14 Q14.6 2.9 14.6 3.5 V11.4 H1.8 V3.4 Z" fill="#f2d83a" stroke="#a88840" stroke-width="1.1"/><rect x="2.4" y="4.4" width="11.6" height="1.5" fill="#fff6d4"/><rect x="2.4" y="5.9" width="11.6" height="4" fill="#f6e04a"/><rect x="1.3" y="10" width="13.8" height="1.9" fill="#9c7420"/></svg>
<div class="a t" style="left:43.8px;top:112.1px">Posting Results-Direct Debits</div>
<svg class="a" style="left:273.8px;top:111.9px" width="6" height="9" viewBox="0 0 6 9"><path d="M0.9 0.3 L5.4 4.5 L0.9 8.7 Z" fill="#1c55ae"/></svg>
<svg class="a" style="left:10.2px;top:132.8px" width="16" height="13" viewBox="0 0 16 13"><path d="M2.2 3.4 V1.9 Q2.2 1.5 2.6 1.5 H7.6 Q8 1.5 8.3 1.9 L8.9 2.9 H14 Q14.6 2.9 14.6 3.5 V11.4 H1.8 V3.4 Z" fill="#f2d83a" stroke="#a88840" stroke-width="1.1"/><rect x="2.4" y="4.4" width="11.6" height="1.5" fill="#fff6d4"/><rect x="2.4" y="5.9" width="11.6" height="4" fill="#f6e04a"/><rect x="1.3" y="10" width="13.8" height="1.9" fill="#9c7420"/></svg>
<div class="a t" style="left:43.8px;top:134.1px">Posting Results-Drafts</div>
<svg class="a" style="left:273.8px;top:133.9px" width="6" height="9" viewBox="0 0 6 9"><path d="M0.9 0.3 L5.4 4.5 L0.9 8.7 Z" fill="#1c55ae"/></svg>
<svg class="a" style="left:10.2px;top:154.8px" width="16" height="13" viewBox="0 0 16 13"><path d="M2.2 3.4 V1.9 Q2.2 1.5 2.6 1.5 H7.6 Q8 1.5 8.3 1.9 L8.9 2.9 H14 Q14.6 2.9 14.6 3.5 V11.4 H1.8 V3.4 Z" fill="#f2d83a" stroke="#a88840" stroke-width="1.1"/><rect x="2.4" y="4.4" width="11.6" height="1.5" fill="#fff6d4"/><rect x="2.4" y="5.9" width="11.6" height="4" fill="#f6e04a"/><rect x="1.3" y="10" width="13.8" height="1.9" fill="#9c7420"/></svg>
<div class="a t" style="left:43.8px;top:156.1px">Posting Results-Upd Pend Items</div>
<svg class="a" style="left:273.8px;top:155.9px" width="6" height="9" viewBox="0 0 6 9"><path d="M0.9 0.3 L5.4 4.5 L0.9 8.7 Z" fill="#1c55ae"/></svg>
<svg class="a" style="left:10.2px;top:176.8px" width="16" height="13" viewBox="0 0 16 13"><path d="M2.2 3.4 V1.9 Q2.2 1.5 2.6 1.5 H7.6 Q8 1.5 8.3 1.9 L8.9 2.9 H14 Q14.6 2.9 14.6 3.5 V11.4 H1.8 V3.4 Z" fill="#f2d83a" stroke="#a88840" stroke-width="1.1"/><rect x="2.4" y="4.4" width="11.6" height="1.5" fill="#fff6d4"/><rect x="2.4" y="5.9" width="11.6" height="4" fill="#f6e04a"/><rect x="1.3" y="10" width="13.8" height="1.9" fill="#9c7420"/></svg>
<div class="a t" style="left:43.8px;top:178.1px">Posting Results-Payments</div>
<svg class="a" style="left:273.8px;top:177.9px" width="6" height="9" viewBox="0 0 6 9"><path d="M0.9 0.3 L5.4 4.5 L0.9 8.7 Z" fill="#1c55ae"/></svg>
<svg class="a" style="left:10.2px;top:198.8px" width="16" height="13" viewBox="0 0 16 13"><path d="M2.2 3.4 V1.9 Q2.2 1.5 2.6 1.5 H7.6 Q8 1.5 8.3 1.9 L8.9 2.9 H14 Q14.6 2.9 14.6 3.5 V11.4 H1.8 V3.4 Z" fill="#f2d83a" stroke="#a88840" stroke-width="1.1"/><rect x="2.4" y="4.4" width="11.6" height="1.5" fill="#fff6d4"/><rect x="2.4" y="5.9" width="11.6" height="4" fill="#f6e04a"/><rect x="1.3" y="10" width="13.8" height="1.9" fill="#9c7420"/></svg>
<div class="a t" style="left:43.8px;top:200.1px">Revenue Estimates</div>
<svg class="a" style="left:273.8px;top:199.9px" width="6" height="9" viewBox="0 0 6 9"><path d="M0.9 0.3 L5.4 4.5 L0.9 8.7 Z" fill="#1c55ae"/></svg>
<svg class="a" style="left:10.2px;top:220.8px" width="16" height="13" viewBox="0 0 16 13"><path d="M2.2 3.4 V1.9 Q2.2 1.5 2.6 1.5 H7.6 Q8 1.5 8.3 1.9 L8.9 2.9 H14 Q14.6 2.9 14.6 3.5 V11.4 H1.8 V3.4 Z" fill="#f2d83a" stroke="#a88840" stroke-width="1.1"/><rect x="2.4" y="4.4" width="11.6" height="1.5" fill="#fff6d4"/><rect x="2.4" y="5.9" width="11.6" height="4" fill="#f6e04a"/><rect x="1.3" y="10" width="13.8" height="1.9" fill="#9c7420"/></svg>
<div class="a t" style="left:43.8px;top:222.1px">Revaluation</div>
<svg class="a" style="left:273.8px;top:221.9px" width="6" height="9" viewBox="0 0 6 9"><path d="M0.9 0.3 L5.4 4.5 L0.9 8.7 Z" fill="#1c55ae"/></svg>
<svg class="a" style="left:10.2px;top:242.8px" width="16" height="13" viewBox="0 0 16 13"><path d="M2.2 3.4 V1.9 Q2.2 1.5 2.6 1.5 H7.6 Q8 1.5 8.3 1.9 L8.9 2.9 H14 Q14.6 2.9 14.6 3.5 V11.4 H1.8 V3.4 Z" fill="#f2d83a" stroke="#a88840" stroke-width="1.1"/><rect x="2.4" y="4.4" width="11.6" height="1.5" fill="#fff6d4"/><rect x="2.4" y="5.9" width="11.6" height="4" fill="#f6e04a"/><rect x="1.3" y="10" width="13.8" height="1.9" fill="#9c7420"/></svg>
<div class="a t" style="left:43.8px;top:244.1px">Archive Receivables</div>
<svg class="a" style="left:273.8px;top:243.9px" width="6" height="9" viewBox="0 0 6 9"><path d="M0.9 0.3 L5.4 4.5 L0.9 8.7 Z" fill="#1c55ae"/></svg>
<svg class="a" style="left:10.2px;top:263.0px" width="16" height="17" viewBox="0 0 16 17"><rect x="1.15" y="0.95" width="13" height="14.8" rx="1.2" fill="url(#pg)" stroke="#6d9ae0" stroke-width="1.5"/><path d="M2.7 14.2 V2.5 H9.4" stroke="#fbfdff" stroke-width="1.2" fill="none"/><rect x="9.7" y="1.7" width="3.8" height="3.8" fill="#84aae8"/><path d="M10 5.2 L13.2 2" stroke="#eef4ff" stroke-width="0.8"/></svg>
<div class="a t" style="left:43.8px;top:266.1px">Request Receivables Update</div>
<svg class="a" style="left:10.2px;top:285.0px" width="16" height="17" viewBox="0 0 16 17"><rect x="1.15" y="0.95" width="13" height="14.8" rx="1.2" fill="url(#pg)" stroke="#6d9ae0" stroke-width="1.5"/><path d="M2.7 14.2 V2.5 H9.4" stroke="#fbfdff" stroke-width="1.2" fill="none"/><rect x="9.7" y="1.7" width="3.8" height="3.8" fill="#84aae8"/><path d="M10 5.2 L13.2 2" stroke="#eef4ff" stroke-width="0.8"/></svg>
<div class="a t" style="left:43.8px;top:288.1px">Out of Balance Customers</div>
<svg class="a" style="left:10.2px;top:307.0px" width="16" height="17" viewBox="0 0 16 17"><rect x="1.15" y="0.95" width="13" height="14.8" rx="1.2" fill="url(#pg)" stroke="#6d9ae0" stroke-width="1.5"/><path d="M2.7 14.2 V2.5 H9.4" stroke="#fbfdff" stroke-width="1.2" fill="none"/><rect x="9.7" y="1.7" width="3.8" height="3.8" fill="#84aae8"/><path d="M10 5.2 L13.2 2" stroke="#eef4ff" stroke-width="0.8"/></svg>
<div class="a t" style="left:43.8px;top:310.1px">Request Entry Event Processor</div>
<svg class="a" style="left:10.2px;top:329.0px" width="16" height="17" viewBox="0 0 16 17"><rect x="1.15" y="0.95" width="13" height="14.8" rx="1.2" fill="url(#pg)" stroke="#6d9ae0" stroke-width="1.5"/><path d="M2.7 14.2 V2.5 H9.4" stroke="#fbfdff" stroke-width="1.2" fill="none"/><rect x="9.7" y="1.7" width="3.8" height="3.8" fill="#84aae8"/><path d="M10 5.2 L13.2 2" stroke="#eef4ff" stroke-width="0.8"/></svg>
<div class="a t" style="left:43.8px;top:332.1px">Request Application Engine</div>
<svg class="a" style="left:10.2px;top:351.0px" width="16" height="17" viewBox="0 0 16 17"><rect x="1.15" y="0.95" width="13" height="14.8" rx="1.2" fill="url(#pg)" stroke="#6d9ae0" stroke-width="1.5"/><path d="M2.7 14.2 V2.5 H9.4" stroke="#fbfdff" stroke-width="1.2" fill="none"/><rect x="9.7" y="1.7" width="3.8" height="3.8" fill="#84aae8"/><path d="M10 5.2 L13.2 2" stroke="#eef4ff" stroke-width="0.8"/></svg>
<div class="a t" style="left:43.8px;top:354.1px">Reset Process</div>
<svg class="a" style="left:10.2px;top:373.0px" width="16" height="17" viewBox="0 0 16 17"><rect x="1.15" y="0.95" width="13" height="14.8" rx="1.2" fill="url(#pg)" stroke="#6d9ae0" stroke-width="1.5"/><path d="M2.7 14.2 V2.5 H9.4" stroke="#fbfdff" stroke-width="1.2" fill="none"/><rect x="9.7" y="1.7" width="3.8" height="3.8" fill="#84aae8"/><path d="M10 5.2 L13.2 2" stroke="#eef4ff" stroke-width="0.8"/></svg>
<div class="a t" style="left:43.8px;top:376.1px">Job Message Log Summary</div>
<svg class="a" style="left:10.2px;top:395.0px" width="16" height="17" viewBox="0 0 16 17"><rect x="1.15" y="0.95" width="13" height="14.8" rx="1.2" fill="url(#pg)" stroke="#6d9ae0" stroke-width="1.5"/><path d="M2.7 14.2 V2.5 H9.4" stroke="#fbfdff" stroke-width="1.2" fill="none"/><rect x="9.7" y="1.7" width="3.8" height="3.8" fill="#84aae8"/><path d="M10 5.2 L13.2 2" stroke="#eef4ff" stroke-width="0.8"/></svg>
<div class="a t" style="left:43.8px;top:398.1px">Update Pagelet Statistics</div>
<svg class="a" style="left:10.2px;top:417.0px" width="16" height="17" viewBox="0 0 16 17"><rect x="1.15" y="0.95" width="13" height="14.8" rx="1.2" fill="url(#pg)" stroke="#6d9ae0" stroke-width="1.5"/><path d="M2.7 14.2 V2.5 H9.4" stroke="#fbfdff" stroke-width="1.2" fill="none"/><rect x="9.7" y="1.7" width="3.8" height="3.8" fill="#84aae8"/><path d="M10 5.2 L13.2 2" stroke="#eef4ff" stroke-width="0.8"/></svg>
<div class="a t" style="left:43.8px;top:420.1px">Request Rebate Process</div>
</div>
</div></body></html>
